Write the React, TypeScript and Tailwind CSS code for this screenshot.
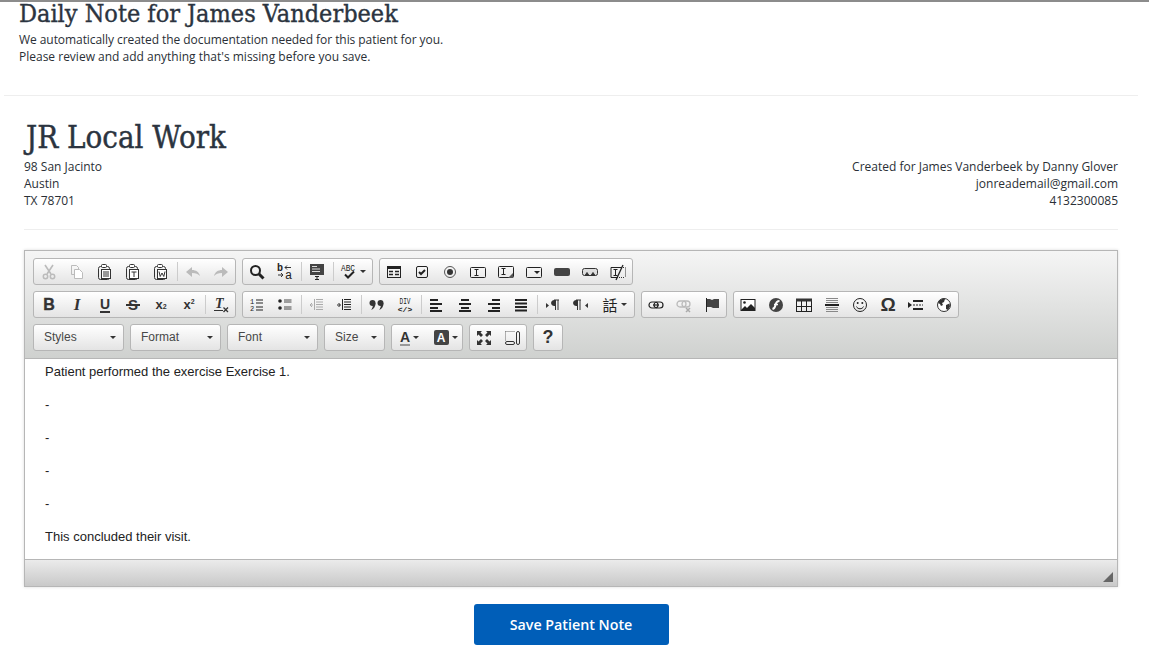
import React from 'react';

type IconProps = { children: React.ReactNode; w?: number };

const Svg = ({ children, w = 16 }: IconProps) => (
  <svg width={w} height={16} viewBox={`0 0 ${w} 16`} fill="none" className="block shrink-0 overflow-visible">
    {children}
  </svg>
);

const Arrow = () => <span className="ml-[3px] h-0 w-0 border-x-[3px] border-t-[3px] border-x-transparent border-t-[#333]" />;

const Clip = ({ children }: { children: React.ReactNode }) => (
  <Svg>
    <rect x="1.500" y="2.500" width="11" height="13" rx="2" stroke="#333" />
    <rect x="4.500" y="0.500" width="5" height="3" rx="1" fill="#fff" stroke="#333" />
    <rect x="4.500" y="5.500" width="9" height="9" fill="#fff" stroke="#333" />
    {children}
  </Svg>
);

const Lines = ({ rows }: { rows: [number, number, number][] }) => (
  <Svg>
    {rows.map(([x, y, w], i) => (
      <rect key={i} x={x} y={y} width={w} height="2" fill="#222" />
    ))}
  </Svg>
);

const icons: Record<string, React.ReactNode> = {
  cut: (
    <Svg>
      <path d="M4 1l6 9M12 1L6 10" stroke="#bbb" strokeWidth="1.600" />
      <circle cx="4.500" cy="12.500" r="2.200" stroke="#bbb" strokeWidth="1.500" />
      <circle cx="11.500" cy="12.500" r="2.200" stroke="#bbb" strokeWidth="1.500" />
    </Svg>
  ),
  copy: (
    <Svg>
      <path d="M2.500 1.500h5l2 2v2M2.500 1.500v9h3" stroke="#bbb" />
      <path d="M5.500 5.500h5l3 3v6h-8z" fill="#fff" stroke="#bbb" />
    </Svg>
  ),
  paste: (
    <Clip>
      <path d="M6 8h6M6 10h6M6 12h6" stroke="#333" />
    </Clip>
  ),
  pasteT: (
    <Clip>
      <path d="M6.500 8h5M9 8v5" stroke="#333" />
    </Clip>
  ),
  pasteW: (
    <Clip>
      <path d="M6 7.500l1.200 5L9 9l1.800 3.500 1.200-5" stroke="#333" />
    </Clip>
  ),
  undo: (
    <Svg>
      <path d="M1 8l6-5v3c4 0 7 2 8 6-2-2-4-3-8-3v4z" fill="#bbb" />
    </Svg>
  ),
  redo: (
    <Svg>
      <path d="M15 8L9 3v3c-4 0-7 2-8 6 2-2 4-3 8-3v4z" fill="#bbb" />
    </Svg>
  ),
  find: (
    <Svg>
      <circle cx="6.500" cy="6.500" r="4.500" stroke="#222" strokeWidth="2" />
      <path d="M10 10l4.500 4.500" stroke="#222" strokeWidth="3" />
    </Svg>
  ),
  replace: (
    <Svg>
      <text x="0" y="7" fontSize="10" fontWeight="700" fontFamily="Liberation Mono, monospace" fill="#222">b</text>
      <text x="8" y="15" fontSize="12" fontFamily="Liberation Mono, monospace" fill="#222">a</text>
      <path d="M8 3.500h6M8 3.500l2-2M8 3.500l2 2M1 11h5M6 11l-2-2M6 11l-2 2" stroke="#333" />
    </Svg>
  ),
  selectAll: (
    <Svg>
      <rect x="1" y="0" width="14" height="11" fill="#444" />
      <path d="M3 2.500h5M3 5h8M3 7.500h8" stroke="#ddd" />
      <path d="M6 12.500h4M8 12v3M6 15.500h4" stroke="#222" />
    </Svg>
  ),
  spell: (
    <Svg>
      <text x="0" y="7" fontSize="9" textLength="14" lengthAdjust="spacingAndGlyphs" fontFamily="Liberation Mono, monospace" fill="#222">ABC</text>
      <path d="M4 10.500l3 3 6-6" stroke="#222" strokeWidth="2" />
    </Svg>
  ),
  form: (
    <Svg>
      <rect x="1.500" y="2.500" width="13" height="11" stroke="#222" />
      <rect x="2" y="3" width="12" height="2" fill="#222" />
      <path d="M3 7.500h4M3 10.500h4M9 7.500h4M9 10.500h4" stroke="#222" strokeWidth="1.400" />
    </Svg>
  ),
  checkbox: (
    <Svg>
      <rect x="2.500" y="2.500" width="11" height="11" rx="1.500" stroke="#222" />
      <path d="M5 8l2 2 4-4" stroke="#222" strokeWidth="2" />
    </Svg>
  ),
  radio: (
    <Svg>
      <circle cx="8" cy="8" r="5.500" stroke="#555" />
      <circle cx="8" cy="8" r="3" fill="#333" />
    </Svg>
  ),
  textfield: (
    <Svg>
      <rect x="0.500" y="3.500" width="15" height="10" rx="1" stroke="#222" />
      <path d="M4.500 5.500h4M6.500 5.500v6M4.500 11.500h4" stroke="#222" />
    </Svg>
  ),
  textarea: (
    <Svg>
      <rect x="0.500" y="2.500" width="15" height="11" rx="1" stroke="#222" />
      <path d="M3.500 4.500h4M5.500 4.500v6M3.500 10.500h4" stroke="#222" />
      <path d="M15 9l-5 5h5z" fill="#555" />
    </Svg>
  ),
  select: (
    <Svg>
      <rect x="0.500" y="3.500" width="15" height="10" rx="1" stroke="#222" />
      <path d="M8 7h6l-3 3z" fill="#222" />
    </Svg>
  ),
  button: (
    <Svg>
      <rect x="0" y="4" width="16" height="8" rx="2" fill="#444" />
    </Svg>
  ),
  imageButton: (
    <Svg>
      <rect x="0.500" y="4.500" width="15" height="7" rx="2" fill="#ddd" stroke="#333" />
      <path d="M3 11.500l2-3 2 3M9 11.500l2-3 2 3" fill="#333" stroke="#333" />
    </Svg>
  ),
  hidden: (
    <Svg>
      <path d="M15.500 3.500v10M11 3.500h4M7 13.500h8" stroke="#333" strokeDasharray="1 1" />
      <path d="M1 3.500h10M1 3.500v10h6" stroke="#222" />
      <path d="M3.500 5.500h4M5.500 5.500v6M3.500 11.500h4" stroke="#222" />
      <path d="M6 16L13 1" stroke="#222" strokeWidth="1.300" />
    </Svg>
  ),
  bold: <span className="font-['Liberation_Sans',sans-serif] text-[16px] font-bold leading-none text-[#333] [-webkit-text-stroke:0.4px_#333]">B</span>,
  italic: <span className="font-['Liberation_Serif',serif] text-[17px] font-bold italic leading-none text-[#333]">I</span>,
  underline: <span className="border-b-2 border-[#333] font-['Liberation_Sans',sans-serif] text-[14px] font-bold leading-[14px] text-[#333]">U</span>,
  strike: (
    <span className="relative font-['Liberation_Sans',sans-serif] text-[15px] font-bold leading-none text-[#333]">
      S
      <span className="absolute left-[-2px] right-[-2px] top-[7px] h-[2px] bg-[#333]" />
    </span>
  ),
  sub: (
    <span className="font-['Liberation_Sans',sans-serif] text-[13px] font-bold leading-none text-[#333]">
      x<span className="text-[7px]">2</span>
    </span>
  ),
  sup: (
    <span className="flex items-start font-['Liberation_Sans',sans-serif] text-[13px] font-bold leading-none text-[#333]">
      x<span className="text-[7px] leading-[8px]">2</span>
    </span>
  ),
  clear: (
    <Svg>
      <text x="2" y="11" fontSize="14" fontWeight="700" fontStyle="italic" fontFamily="Liberation Serif, serif" fill="#333">T</text>
      <path d="M1 13.500h9" stroke="#333" />
      <path d="M10.500 10.500l4.500 4.500M15 10.500L10.500 15" stroke="#333" strokeWidth="1.300" />
    </Svg>
  ),
  ol: (
    <Svg>
      <text x="1" y="7" fontSize="7" fontFamily="Liberation Mono, monospace" fill="#222">1</text>
      <text x="1" y="14" fontSize="7" fontFamily="Liberation Mono, monospace" fill="#222">2</text>
      <path d="M7 3h7M7 6h7M7 10h7M7 13h7" stroke="#222" />
    </Svg>
  ),
  ul: (
    <Svg>
      <circle cx="3" cy="4" r="1.800" fill="#222" />
      <circle cx="3" cy="11" r="1.800" fill="#222" />
      <path d="M7 3h7.500M7 5h7.500M7 10h7.500M7 12h7.500" stroke="#333" strokeWidth="0.900" />
    </Svg>
  ),
  outdent: (
    <Svg>
      <path d="M7 2.500h7M7 5h7M7 7.500h7M7 10h7M7 12.500h7M5.500 2v11" stroke="#aaa" />
      <path d="M1 8h3M1 8l2-2M1 8l2 2" stroke="#aaa" />
    </Svg>
  ),
  indent: (
    <Svg>
      <path d="M7 2.500h7M7 5h7M7 7.500h7M7 10h7M7 12.500h7M5.500 2v11" stroke="#222" />
      <path d="M0 8h3M3.500 8l-2-2M3.500 8l-2 2" stroke="#222" />
    </Svg>
  ),
  quote: (
    <Svg>
      <circle cx="3.500" cy="6" r="3" fill="#333" />
      <path d="M6.500 6c0 3.500-1.500 6-4.500 7 1.200-1.500 1.800-3 1.800-4.500z" fill="#333" />
      <circle cx="11.500" cy="6" r="3" fill="#333" />
      <path d="M14.500 6c0 3.500-1.500 6-4.500 7 1.200-1.500 1.800-3 1.800-4.500z" fill="#333" />
    </Svg>
  ),
  div: (
    <Svg>
      <text x="8" y="7" textAnchor="middle" fontSize="8.500" textLength="11" lengthAdjust="spacingAndGlyphs" fontFamily="Liberation Mono, monospace" fill="#222">DIV</text>
      <text x="8" y="15" textAnchor="middle" fontSize="8" fontWeight="700" fontFamily="Liberation Mono, monospace" fill="#222">&lt;/&gt;</text>
    </Svg>
  ),
  alignLeft: <Lines rows={[[1, 2, 8], [1, 6, 12], [1, 10, 8], [1, 13, 12]]} />,
  alignCenter: <Lines rows={[[4, 2, 8], [2, 6, 12], [4, 10, 8], [2, 13, 12]]} />,
  alignRight: <Lines rows={[[7, 2, 8], [3, 6, 12], [7, 10, 8], [3, 13, 12]]} />,
  justify: <Lines rows={[[2, 2, 12], [2, 5.5, 12], [2, 9, 12], [2, 12.5, 12]]} />,
  ltr: (
    <Svg>
      <path d="M1 6l3 2.500L1 11z" fill="#333" />
      <path d="M9 3.500a2.500 2.500 0 000 5h1v-5zM10.500 3v10M13 3v10M9 3h5" stroke="#333" />
      <path d="M7 4h3v4H7z" fill="#333" />
    </Svg>
  ),
  rtl: (
    <Svg>
      <path d="M15 6l-3 2.500L15 11z" fill="#333" />
      <path d="M3 3.500a2.500 2.500 0 000 5h1v-5zM4.500 3v10M7 3v10M3 3h5" stroke="#333" />
      <path d="M1 4h3v4H1z" fill="#333" />
    </Svg>
  ),
  lang: (
    <Svg>
      <text x="8" y="13.500" textAnchor="middle" fontSize="15" fontFamily="Noto Sans CJK TC, sans-serif" fill="#222">話</text>
    </Svg>
  ),
  link: (
    <Svg>
      <rect x="1" y="5" width="9" height="6" rx="3" stroke="#222" strokeWidth="1.200" />
      <rect x="6" y="5" width="9" height="6" rx="3" stroke="#222" strokeWidth="1.200" />
      <path d="M5 8h6" stroke="#222" strokeWidth="1.200" />
    </Svg>
  ),
  unlink: (
    <Svg>
      <rect x="1" y="4" width="9" height="6" rx="3" stroke="#bbb" strokeWidth="1.300" />
      <rect x="6" y="4" width="8" height="6" rx="3" stroke="#bbb" strokeWidth="1.300" />
      <path d="M10 11l4 4M14 11l-4 4" stroke="#aaa" strokeWidth="1.500" />
    </Svg>
  ),
  anchor: (
    <Svg>
      <path d="M2.500 1v14" stroke="#222" />
      <path d="M3 2h3l2 1 2-1h5v9H9l-2-1-4 0z" fill="#444" />
    </Svg>
  ),
  image: (
    <Svg>
      <rect x="1" y="2.500" width="14" height="11" fill="#fff" stroke="#222" />
      <circle cx="4.500" cy="5.500" r="1.300" fill="#222" />
      <path d="M1 13l4-4 2 2 4-4 4 4v3H1z" fill="#222" />
    </Svg>
  ),
  flash: (
    <Svg>
      <circle cx="8" cy="8" r="7" fill="#444" />
      <path d="M11.500 4c-3 0-3.500 1.500-4 4s-1 3.500-3 4" stroke="#fff" strokeWidth="2" />
      <path d="M6 7.500h4" stroke="#fff" strokeWidth="1.500" />
    </Svg>
  ),
  table: (
    <Svg>
      <rect x="0.500" y="2.500" width="15" height="12" stroke="#222" />
      <rect x="0" y="1.500" width="16" height="3" fill="#333" />
      <path d="M5.500 4v10M10.500 4v10M1 9.500h14" stroke="#222" />
    </Svg>
  ),
  hr: (
    <Svg>
      <path d="M2 1.500h12M2 3.500h12M2 5.500h12M2 10.500h12M2 12.500h12M2 14.500h12" stroke="#888" />
      <rect x="1" y="7" width="14" height="2" fill="#222" />
    </Svg>
  ),
  smiley: (
    <Svg>
      <circle cx="8" cy="8" r="6.500" stroke="#222" />
      <circle cx="5.700" cy="6" r="1" fill="#222" />
      <circle cx="10.300" cy="6" r="1" fill="#222" />
      <path d="M4.500 9.500c1 3 6 3 7 0" stroke="#222" />
    </Svg>
  ),
  omega: <span className="font-['Liberation_Sans',sans-serif] text-[19px] font-bold leading-none text-[#333]">Ω</span>,
  pageBreak: (
    <Svg>
      <path d="M0 5l4 3-4 3z" fill="#222" />
      <rect x="5" y="3" width="10" height="2" fill="#222" />
      <path d="M5 8h10" stroke="#222" strokeDasharray="2 1" />
      <rect x="5" y="11" width="10" height="2" fill="#222" />
    </Svg>
  ),
  globe: (
    <Svg>
      <circle cx="8" cy="8" r="6.500" fill="#fff" stroke="#333" />
      <path d="M3 3.500l4-2 2 .5-1 3-2 1 1 2-2 1-1-2-2-1zM10 8l3.500-1.500.5 3-2 3.500-2-1z" fill="#333" />
    </Svg>
  ),
  maximize: (
    <Svg>
      <path d="M1 1h5L4.500 2.500 7 5 5 7 2.500 4.500 1 6zM15 1v5l-1.500-1.500L11 7 9 5l2.500-2.500L10 1zM1 15v-5l1.500 1.500L5 9l2 2-2.500 2.500L6 15zM15 15h-5l1.500-1.500L9 11l2-2 2.500 2.500L15 10z" fill="#333" />
    </Svg>
  ),
  showBlocks: (
    <Svg>
      <path d="M1.500 1.500h9M1.500 1.500v9" stroke="#666" strokeDasharray="1 1" />
      <rect x="1.500" y="11.500" width="9" height="3" rx="1.500" stroke="#333" />
      <rect x="12.500" y="1.500" width="3" height="13" rx="1.500" stroke="#333" />
    </Svg>
  ),
};

const Sep = () => <span className="mx-auto block h-[19px] w-px bg-[#ccc]" />;

type Item = string | { id: string; width: string } | null;

const Group = ({ items, className = '' }: { items: Item[]; className?: string }) => (
  <div className={`flex h-[27px] items-center rounded-[3px] border border-[#b6b6b6] bg-gradient-to-b from-white to-[#e4e4e4] ${className}`}>
    {items.map((item, i) => {
      if (item === null) {
        return (
          <span key={i} className="flex w-[4px] justify-center">
            <Sep />
          </span>
        );
      }
      if (typeof item === 'string') {
        return (
          <span key={i} className="flex h-[25px] w-[28px] items-center justify-center">
            {icons[item]}
          </span>
        );
      }
      return (
        <span key={i} className={`flex h-[25px] items-center justify-center ${item.width}`}>
          {icons[item.id]}
          <Arrow />
        </span>
      );
    })}
  </div>
);

const Combo = ({ label, wide = true }: { label: string; wide?: boolean }) => (
  <div
    className={`flex h-[27px] items-center justify-between rounded-[3px] border border-[#b6b6b6] bg-gradient-to-b from-white to-[#e4e4e4] pl-[10px] pr-[7px] font-['Liberation_Sans',sans-serif] text-[12px] text-[#484848] ${
      wide ? 'w-[91px]' : 'w-[61px]'
    }`}
  >
    {label}
    <Arrow />
  </div>
);

const ColorBtn = ({ dark }: { dark?: boolean }) => (
  <span className={`flex h-[25px] w-[35px] items-center justify-center ${dark ? 'pl-[2px]' : ''}`}>
    {dark ? (
      <span className="flex h-[15px] w-[15px] items-center justify-center rounded-[2px] bg-[#444] font-['Liberation_Sans',sans-serif] text-[12px] font-bold leading-none text-white">A</span>
    ) : (
      <span className="border-b-2 border-[#999] font-['Liberation_Sans',sans-serif] text-[14px] font-bold leading-[14px] text-[#333]">A</span>
    )}
    <Arrow />
  </span>
);

export default function App() {
  return (
    <div className="h-[664px] overflow-hidden border-t-2 border-[#8c8c8c] bg-white font-['Open_Sans',sans-serif] text-[12px] leading-[17px] text-[#2a2f36]">
      {/* Page header */}
      <div className="mx-[4px] h-[94px] w-[1134px] border-b border-[#eeeeee] pl-[15px]">
        <h1 className="h-[29px] -translate-y-[1px] font-['DejaVu_Serif_Condensed','DejaVu_Serif',serif] text-[25px] font-normal leading-[26px] text-[#2b3440] [-webkit-text-stroke:0.35px_#2b3440]">Daily Note for James Vanderbeek</h1>
        <p className="-mt-[1px] pt-[1px] tracking-[-0.065px]">We automatically created the documentation needed for this patient for you.</p>
        <p>Please review and add anything that's missing before you save.</p>
      </div>

      <div className="px-[24px] pr-[31px]">
        {/* Practice details */}
        <div className="h-[134px] border-b border-[#eeeeee]">
          <h2 className="h-[56px] pl-[2px] pt-[22px] font-['DejaVu_Serif_Condensed','DejaVu_Serif',serif] text-[31px] font-normal leading-[38px] text-[#2b3440] [-webkit-text-stroke:0.4px_#2b3440]">JR Local Work</h2>
          <div className="flex justify-between pt-[6px]">
            <div>
              <div>98 San Jacinto</div>
              <div>Austin</div>
              <div>TX 78701</div>
            </div>
            <div className="text-right">
              <div>Created for James Vanderbeek by Danny Glover</div>
              <div>jonreademail@gmail.com</div>
              <div>4132300085</div>
            </div>
          </div>
        </div>

        {/* Editor */}
        <div className="mt-[20px] border border-[#b6b6b6] shadow-[0_0_3px_rgba(0,0,0,0.15)]">
          <div className="flex h-[108px] flex-col gap-[6px] border-b border-[#b6b6b6] bg-gradient-to-b from-[#f5f5f5] to-[#cfd1cf] px-[8px] pt-[7px]">
            <div className="flex gap-[6px]">
              <Group className="pl-[1px]" items={['cut', 'copy', 'paste', 'pasteT', 'pasteW', null, 'undo', 'redo']} />
              <Group items={['find', 'replace', null, 'selectAll', null, { id: 'spell', width: 'w-[37px]' }]} />
              <Group items={['form', 'checkbox', 'radio', 'textfield', 'textarea', 'select', 'button', 'imageButton', 'hidden']} />
            </div>
            <div className="flex gap-[6px]">
              <Group className="pl-[1px]" items={['bold', 'italic', 'underline', 'strike', 'sub', 'sup', null, 'clear']} />
              <Group items={['ol', 'ul', null, 'outdent', 'indent', null, 'quote', 'div', null, 'alignLeft', 'alignCenter', 'alignRight', 'justify', null, 'ltr', 'rtl', { id: 'lang', width: 'w-[39px]' }]} />
              <Group items={['link', 'unlink', 'anchor']} />
              <Group items={['image', 'flash', 'table', 'hr', 'smiley', 'omega', 'pageBreak', 'globe']} />
            </div>
            <div className="flex gap-[6px]">
              <Combo label="Styles" />
              <Combo label="Format" />
              <Combo label="Font" />
              <Combo label="Size" wide={false} />
              <div className="flex h-[27px] w-[72px] items-center rounded-[3px] border border-[#b6b6b6] bg-gradient-to-b from-white to-[#e4e4e4]">
                <ColorBtn />
                <ColorBtn dark />
              </div>
              <Group items={['maximize', 'showBlocks']} className="w-[58px]" />
              <div className="flex h-[27px] w-[30px] items-center justify-center rounded-[3px] border border-[#b6b6b6] bg-gradient-to-b from-white to-[#e4e4e4] font-['Liberation_Sans',sans-serif] text-[18px] font-bold text-[#333]">?</div>
            </div>
          </div>

          <div className="h-[200px] bg-white px-[20px] pt-[4px] font-['Liberation_Sans',sans-serif] text-[13px] leading-[17px] text-[#222]">
            <p>Patient performed the exercise Exercise 1.</p>
            <p className="mt-[16px]">-</p>
            <p className="mt-[16px]">-</p>
            <p className="mt-[16px]">-</p>
            <p className="mt-[16px]">-</p>
            <p className="mt-[16px]">This concluded their visit.</p>
          </div>

          <div className="relative h-[27px] border-t border-[#b6b6b6] bg-gradient-to-b from-[#ebebeb] to-[#c9c9c9]">
            <span className="absolute bottom-[4px] right-[4px] h-0 w-0 border-b-[10px] border-l-[10px] border-b-[#666] border-l-transparent" />
          </div>
        </div>

        <div className="mt-[17px] flex justify-center">
          <button className="h-[41px] w-[195px] rounded-[3px] bg-[#005eb8] text-[14.250px] font-semibold text-white">Save Patient Note</button>
        </div>
      </div>
    </div>
  );
}
